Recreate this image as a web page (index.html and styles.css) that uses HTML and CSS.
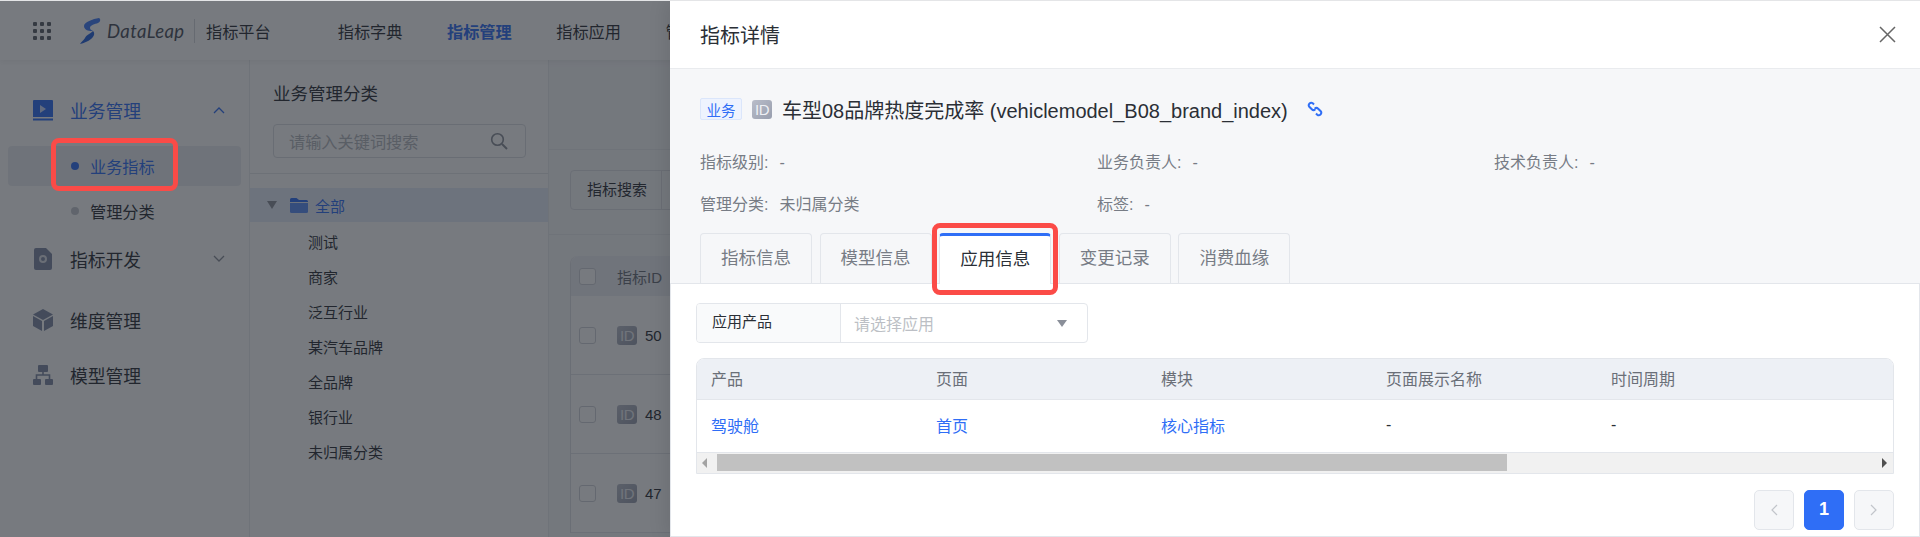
FILE: index.html
```html
<!DOCTYPE html>
<html lang="zh-CN">
<head>
  <meta charset="UTF-8" />
  <title>指标详情</title>
  <link rel="stylesheet" href="styles.css">
</head>
<body>
  <div class="app">
    <header class="topbar">
      <svg class="grid-icon" width="18" height="18" viewBox="0 0 18 18" fill="#5b5f68">
        <rect x="0" y="0" width="4" height="4" rx="1"/><rect x="7" y="0" width="4" height="4" rx="1"/><rect x="14" y="0" width="4" height="4" rx="1"/>
        <rect x="0" y="7" width="4" height="4" rx="1"/><rect x="7" y="7" width="4" height="4" rx="1"/><rect x="14" y="7" width="4" height="4" rx="1"/>
        <rect x="0" y="14" width="4" height="4" rx="1"/><rect x="7" y="14" width="4" height="4" rx="1"/><rect x="14" y="14" width="4" height="4" rx="1"/>
      </svg>
      <svg class="logo-mark" width="22" height="26" viewBox="0 0 22 26">
        <path d="M20 0c2 1 1.500 4-1 5-3 1.200-8 2-8 5 0 1.200 1 2.200 3 3-4 .3-9-1-9-5C5 4 14 1 20 0z" fill="#3f7bf8"/>
        <path d="M14 13c2 2 1.500 5-2 8-3 2.600-7 4-11 5 1-2 4-4 5-6 1.200-3 5-4 8-7z" fill="#2561dc"/>
      </svg>
      <span class="logo-text">DataLeap</span>
      <span class="logo-line"></span>
      <span class="logo-sub">指标平台</span>
      <nav class="topnav">
        <a>指标字典</a>
        <a class="on">指标管理</a>
        <a>指标应用</a>
        <a>管理中心</a>
      </nav>
    </header>

    <div class="main">
      <aside class="sidebar">
        <div class="side-group on">
          <svg width="20" height="21" viewBox="0 0 20 21"><path d="M1 0h18a1 1 0 0 1 1 1v16H0V1a1 1 0 0 1 1-1z" fill="#2f6ef6"/><rect y="18.500" width="20" height="2" fill="#2f6ef6"/><path d="M7 5l6 4-6 4z" fill="#fff" opacity=".75"/></svg>
          <span>业务管理</span>
          <svg class="chev" width="12" height="8" viewBox="0 0 12 8"><path d="M1 7l5-5 5 5" fill="none" stroke="#2f6ef6" stroke-width="1.300"/></svg>
        </div>
        <div class="side-sub on"><i></i>业务指标</div>
        <div class="side-sub"><i></i>管理分类</div>
        <div class="side-group second">
          <svg width="20" height="22" viewBox="0 0 20 22"><path d="M3 0h10l6 6v14a2 2 0 0 1-2 2H3a2 2 0 0 1-2-2V2a2 2 0 0 1 2-2z" fill="#7f8ba6"/><circle cx="10" cy="11" r="3" fill="none" stroke="#fff" stroke-width="2" opacity=".75"/></svg>
          <span>指标开发</span>
          <svg class="chev" width="12" height="8" viewBox="0 0 12 8"><path d="M1 1l5 5 5-5" fill="none" stroke="#8a8f99" stroke-width="1.300"/></svg>
        </div>
        <div class="side-group third">
          <svg width="20" height="22" viewBox="0 0 20 22"><path d="M10 0l10 5.500-10 5.500L0 5.500z" fill="#7f8ba6"/><path d="M0 7l9 5v10l-9-5z" fill="#7f8ba6"/><path d="M20 7l-9 5v10l9-5z" fill="#7f8ba6"/></svg>
          <span>维度管理</span>
        </div>
        <div class="side-group fourth">
          <svg width="20" height="20" viewBox="0 0 20 20" fill="#7f8ba6"><rect x="5" y="0" width="10" height="7" rx="1"/><rect x="0" y="14" width="8" height="6" rx="1"/><rect x="12" y="14" width="8" height="6" rx="1"/><path d="M3.500 14v-4h13v4M10 7v3" fill="none" stroke="#7f8ba6" stroke-width="1.600"/></svg>
          <span>模型管理</span>
        </div>
      </aside>

      <section class="cat-panel">
        <h3>业务管理分类</h3>
        <div class="cat-search">
          <div class="search-box">
            <span>请输入关键词搜索</span>
            <svg width="18" height="18" viewBox="0 0 18 18"><circle cx="7.500" cy="7.500" r="5.800" fill="none" stroke="#8a8f99" stroke-width="1.600"/><path d="M12 12l5 5" stroke="#8a8f99" stroke-width="2"/></svg>
          </div>
        </div>
        <div class="tree-row on">
          <i class="tree-arrow"></i>
          <svg width="18" height="15" viewBox="0 0 18 15"><path d="M0 1.500A1.500 1.500 0 0 1 1.500 0h5L9 2h7.500A1.500 1.500 0 0 1 18 3.500V4H0z" fill="#2f6ef6"/><path d="M0 5h18v8.500a1.500 1.500 0 0 1-1.500 1.500h-15A1.500 1.500 0 0 1 0 13.500z" fill="#5b8ef8"/></svg>
          <span>全部</span>
        </div>
        <ul class="tree-list">
          <li>测试</li>
          <li>商家</li>
          <li>泛互行业</li>
          <li>某汽车品牌</li>
          <li>全品牌</li>
          <li>银行业</li>
          <li>未归属分类</li>
        </ul>
      </section>

      <section class="content">
        <div class="content-top"></div>
        <div class="filter-band">
          <div class="filter-box"><span>指标搜索</span></div>
        </div>
        <div class="bg-table">
          <div class="bg-head"><i class="check"></i><span>指标ID</span></div>
          <div class="bg-row"><i class="check"></i><span class="id-badge">ID</span><span>50</span></div>
          <div class="bg-row"><i class="check"></i><span class="id-badge">ID</span><span>48</span></div>
          <div class="bg-row"><i class="check"></i><span class="id-badge">ID</span><span>47</span></div>
        </div>
      </section>
    </div>

    <div class="mask"></div>

    <aside class="drawer">
      <div class="drawer-head">
        <h2>指标详情</h2>
        <svg width="17" height="17" viewBox="0 0 17 17"><path d="M1 1l15 15M16 1L1 16" stroke="#666" stroke-width="1.500"/></svg>
      </div>
      <div class="drawer-body">
        <div class="metric-title">
          <span class="tag">业务</span>
          <span class="id-badge">ID</span>
          <span class="metric-name">车型08品牌热度完成率 (vehiclemodel_B08_brand_index)</span>
          <svg class="link-icon" width="16" height="16" viewBox="0 0 16 16" fill="none" stroke="#2f6ef6" stroke-width="2">
            <path d="M7 3.500L5.800 2.300a2.500 2.500 0 0 0-3.500 3.500l2.500 2.500a2.500 2.500 0 0 0 3.500 0"/>
            <path d="M9 12.500l1.200 1.200a2.500 2.500 0 0 0 3.500-3.500l-2.500-2.500a2.500 2.500 0 0 0-3.500 0"/>
          </svg>
        </div>
        <div class="meta-grid">
          <div><label>指标级别:</label><span>-</span></div>
          <div><label>业务负责人:</label><span>-</span></div>
          <div><label>技术负责人:</label><span>-</span></div>
          <div><label>管理分类:</label><span>未归属分类</span></div>
          <div><label>标签:</label><span>-</span></div>
        </div>
        <div class="tabs">
          <div class="tab">指标信息</div>
          <div class="tab">模型信息</div>
          <div class="tab on">应用信息</div>
          <div class="tab">变更记录</div>
          <div class="tab">消费血缘</div>
        </div>
        <div class="tab-pane">
          <div class="select-field">
            <div class="select-label">应用产品</div>
            <div class="select-value">
              <span>请选择应用</span>
              <i class="select-arrow"></i>
            </div>
          </div>
          <div class="table-wrap">
            <table>
              <thead>
                <tr><th>产品</th><th>页面</th><th>模块</th><th>页面展示名称</th><th>时间周期</th></tr>
              </thead>
              <tbody>
                <tr>
                  <td><a>驾驶舱</a></td>
                  <td><a>首页</a></td>
                  <td><a>核心指标</a></td>
                  <td>-</td>
                  <td>-</td>
                </tr>
              </tbody>
            </table>
            <div class="hscroll">
              <i class="arrow-left"></i>
              <div class="thumb"></div>
              <i class="arrow-right"></i>
            </div>
          </div>
          <div class="pager">
            <button><svg width="8" height="12" viewBox="0 0 8 12"><path d="M7 1L2 6l5 5" fill="none" stroke="#c2c5cb" stroke-width="1.200"/></svg></button>
            <button class="on">1</button>
            <button><svg width="8" height="12" viewBox="0 0 8 12"><path d="M1 1l5 5-5 5" fill="none" stroke="#c2c5cb" stroke-width="1.200"/></svg></button>
          </div>
        </div>
      </div>
    </aside>

    <!-- red annotation boxes drawn on the screenshot -->
    <div class="mark mark-side"></div>
    <div class="mark mark-tab"></div>
  </div>
</body>
</html>
```

FILE: styles.css
```css
:root {
  --blue: #2f6ef6;
  --line: #e3e6eb;
  --text: #2b2f36;
  --gray: #777c85;
  --red: #fb4b47;
}

* {
  box-sizing: border-box;
}

body {
  margin: 0;
  height: 537px;
  overflow: hidden;
  border-top: 1px solid #e4e5e7;
  background: #fff;
  color: var(--text);
  font-family: "Liberation Sans", "Noto Sans CJK SC", sans-serif;
  font-size: 16px;
}

.app {
  position: relative;
  height: 536px;
  display: flex;
  flex-direction: column;
  overflow: hidden;
}

/* top bar */
.topbar {
  height: 59px;
  flex: none;
  display: flex;
  align-items: center;
  padding-left: 33px;
  background: #fff;
  box-shadow: 0 2px 6px rgba(0,0,0,0.06);
  position: relative;
}

.logo-mark {
  margin-left: 28px;
}

.logo-text {
  margin-left: 6px;
  width: 76px;
  font-family: "Lato", sans-serif;
  font-style: italic;
  font-size: 18.500px;
  color: #4a4f5a;
  letter-spacing: 0.4px;
  white-space: nowrap;
}

.logo-line {
  width: 1px;
  height: 24px;
  margin-left: 11px;
  background: #d5d8dd;
}

.logo-sub {
  margin-left: 11px;
  font-size: 16.200px;
}

.topnav {
  display: flex;
  margin-left: 67px;
  gap: 44.500px;
  font-size: 16.200px;
}

.topnav .on {
  color: var(--blue);
  font-weight: 700;
}

.main {
  flex: 1;
  display: flex;
  min-height: 0;
}

/* sidebar */
.sidebar {
  width: 250px;
  flex: none;
  padding-top: 28px;
  border-right: 1px solid #eceef1;
}

.side-group {
  height: 44px;
  display: flex;
  align-items: center;
  padding-left: 33px;
  font-size: 17.800px;
}

.side-group span {
  margin-left: 17px;
}

.side-group .chev {
  margin-left: 72px;
}

.side-group.on {
  color: var(--blue);
}

.side-group.second {
  margin-top: 6px;
}

.side-group.third {
  margin-top: 17px;
}

.side-group.fourth {
  margin-top: 11px;
}

.side-sub {
  height: 40px;
  margin: 5px 8px 0;
  padding-left: 82px;
  display: flex;
  align-items: center;
  border-radius: 4px;
  font-size: 16.200px;
  position: relative;
}

.side-sub i {
  position: absolute;
  left: 63px;
  width: 8px;
  height: 8px;
  border-radius: 50%;
  background: #c6c9cf;
}

.side-sub.on {
  margin-top: 14px;
  background: #eceef2;
  color: var(--blue);
}

.side-sub.on i {
  background: var(--blue);
}

/* category panel */
.cat-panel {
  width: 299px;
  flex: none;
  padding-top: 22px;
  border-right: 1px solid #eceef1;
}

.cat-panel h3 {
  margin: 0 0 18px 23px;
  font-size: 17.500px;
  font-weight: 400;
  line-height: 24px;
}

.cat-search {
  padding: 0 22px 15px 23px;
  border-bottom: 1px solid #e6e8ec;
}

.search-box {
  height: 34px;
  display: flex;
  align-items: center;
  justify-content: space-between;
  padding: 0 17px 0 15px;
  border: 1px solid #dcdfe4;
  border-radius: 4px;
  color: #b5b8be;
  font-size: 16.200px;
}

.tree-row {
  height: 34px;
  margin-top: 14px;
  display: flex;
  align-items: center;
  padding-left: 17px;
  background: #e6edfa;
  color: var(--blue);
  font-size: 15px;
}

.tree-arrow {
  width: 0;
  height: 0;
  border: 5px solid transparent;
  border-top: 8px solid #8a8f99;
  border-bottom: 0;
  margin-right: 13px;
}

.tree-row span {
  margin-left: 7px;
}

.tree-list {
  list-style: none;
  margin: 3px 0 0;
  padding: 0 0 0 58px;
  font-size: 15px;
}

.tree-list li {
  height: 35px;
  line-height: 35px;
}

/* page behind the drawer */
.content {
  flex: 1;
  min-width: 0;
  background: #f8f9fb;
}

.content-top {
  height: 90px;
  border-bottom: 1px solid #eceef1;
}

.filter-band {
  height: 85px;
  padding: 20px 0 0 21px;
  border-bottom: 1px solid #eceef1;
}

.filter-box {
  width: 400px;
  height: 40px;
  padding-left: 16px;
  display: flex;
  align-items: center;
  border: 1px solid #dfe2e7;
  border-radius: 4px;
  font-size: 15px;
}

.filter-box span {
  width: 75px;
  height: 38px;
  line-height: 38px;
  border-right: 1px solid #dfe2e7;
}

.bg-table {
  margin: 21px 0 0 21px;
  border-left: 1px solid #dfe2e7;
  border-top-left-radius: 8px;
  background: #fff;
  font-size: 15px;
}

.bg-head {
  height: 40px;
  display: flex;
  align-items: center;
  padding-left: 8px;
  background: #edf0f5;
  border-top-left-radius: 8px;
  color: #6a6f78;
}

.bg-row {
  height: 79px;
  display: flex;
  align-items: center;
  padding-left: 8px;
  border-bottom: 1px solid #e3e6eb;
}

.check {
  width: 17px;
  height: 17px;
  margin-right: 21px;
  border: 1px solid #d0d3d9;
  border-radius: 3px;
  background: #fff;
}

.id-badge {
  width: 20px;
  height: 19px;
  flex: none;
  display: inline-flex;
  align-items: center;
  justify-content: center;
  border-radius: 3px;
  background: linear-gradient(135deg, #b9bdc9, #989eae);
  color: #eef0f4;
  font-size: 15px;
  letter-spacing: -0.5px;
}

.bg-row .id-badge {
  margin-right: 8px;
}

/* mask + drawer */
.mask {
  position: absolute;
  inset: 0;
  background: rgba(29,33,41,0.6);
}

.drawer {
  position: absolute;
  top: 0;
  right: 0;
  bottom: 0;
  left: 670px;
  display: flex;
  flex-direction: column;
  background: #f6f7f9;
  box-shadow: -6px 0 16px rgba(0,0,0,0.08);
}

.drawer-head {
  height: 68px;
  flex: none;
  display: flex;
  align-items: center;
  justify-content: space-between;
  padding: 0 24px 0 30px;
  background: #fff;
  border-bottom: 1px solid #e9ebee;
}

.drawer-head h2 {
  margin: 0;
  font-size: 20px;
  font-weight: 400;
}

.metric-title {
  display: flex;
  align-items: center;
  height: 22px;
  margin: 29px 0 0 30px;
}

.tag {
  width: 42px;
  height: 22px;
  display: flex;
  align-items: center;
  justify-content: center;
  border: 1px solid #dbe6fb;
  border-radius: 2px;
  background: #eef3fe;
  color: var(--blue);
  font-size: 14.500px;
}

.metric-title .id-badge {
  margin-left: 10px;
}

.metric-name {
  margin-left: 10px;
  font-size: 20px;
  white-space: nowrap;
}

.link-icon {
  margin-left: 19px;
}

.meta-grid {
  display: grid;
  grid-template-columns: repeat(3, 397px);
  margin: 22px 0 0 30px;
  color: var(--gray);
  font-size: 16px;
}

.meta-grid div {
  height: 42px;
  line-height: 42px;
}

.meta-grid span {
  margin-left: 11px;
}

.tabs {
  display: flex;
  gap: 7.600px;
  height: 51px;
  margin: 7px 0 -1px 30px;
  position: relative;
}

.tab {
  width: 112px;
  height: 51px;
  display: flex;
  align-items: center;
  justify-content: center;
  padding-bottom: 6px;
  border: 1px solid var(--line);
  border-bottom: 0;
  border-radius: 4px 4px 0 0;
  color: var(--gray);
  font-size: 17.500px;
}

.tab.on {
  background: #fff;
  border-top: 3px solid var(--blue);
  color: var(--text);
}

.tab-pane {
  height: 254px;
  padding: 19px 25px 0;
  background: #fff;
  border: 1px solid var(--line);
}

.select-field {
  width: 392px;
  height: 40px;
  display: flex;
  border: 1px solid var(--line);
  border-radius: 4px;
  overflow: hidden;
}

.select-label {
  width: 144px;
  padding-left: 15px;
  line-height: 36px;
  background: #f9fafb;
  border-right: 1px solid var(--line);
  font-size: 15px;
}

.select-value {
  flex: 1;
  display: flex;
  align-items: center;
  justify-content: space-between;
  padding: 0 20px 0 13px;
  color: #bcbfc5;
  font-size: 16px;
}

.select-arrow {
  width: 0;
  height: 0;
  border: 5px solid transparent;
  border-top: 7px solid #8a8f99;
  border-bottom: 0;
}

.table-wrap {
  margin-top: 15px;
  border: 1px solid var(--line);
  border-radius: 8px 8px 0 0;
  overflow: hidden;
}

table {
  width: 100%;
  border-collapse: collapse;
  table-layout: fixed;
  font-size: 16px;
}

th {
  width: 225px;
  height: 40px;
  padding: 0 0 2px 14px;
  background: #edf0f5;
  border-bottom: 1px solid var(--line);
  color: #6a6f78;
  font-weight: 400;
  text-align: left;
}

th:last-child {
  width: auto;
}

td {
  height: 53px;
  padding: 0 0 2px 14px;
  border-bottom: 1px solid var(--line);
}

td a {
  color: var(--blue);
}

.hscroll {
  height: 20px;
  display: flex;
  align-items: center;
  position: relative;
  background: #f1f1f1;
}

.thumb {
  width: 790px;
  height: 17px;
  margin-left: 20px;
  background: #c1c1c1;
}

.arrow-left,
.arrow-right {
  position: absolute;
  width: 0;
  height: 0;
  border: 5px solid transparent;
}

.arrow-left {
  left: 5px;
  border-right: 5px solid #a3a3a3;
  border-left: 0;
}

.arrow-right {
  right: 6px;
  border-left: 5px solid #505050;
  border-right: 0;
}

.pager {
  display: flex;
  justify-content: flex-end;
  gap: 10px;
  margin-top: 16px;
}

.pager button {
  width: 40px;
  height: 40px;
  padding: 0;
  display: flex;
  align-items: center;
  justify-content: center;
  border: 1px solid var(--line);
  border-radius: 5px;
  background: #f6f7f9;
  font-family: inherit;
}

.pager button.on {
  border-color: var(--blue);
  background: var(--blue);
  color: #fff;
  font-size: 18px;
  font-weight: 700;
}

/* annotations */
.mark {
  position: absolute;
  border: 5px solid var(--red);
  border-radius: 8px;
}

.mark-side {
  top: 137px;
  left: 51px;
  width: 127px;
  height: 53px;
}

.mark-tab {
  top: 222px;
  left: 932px;
  width: 126px;
  height: 72px;
}
```
